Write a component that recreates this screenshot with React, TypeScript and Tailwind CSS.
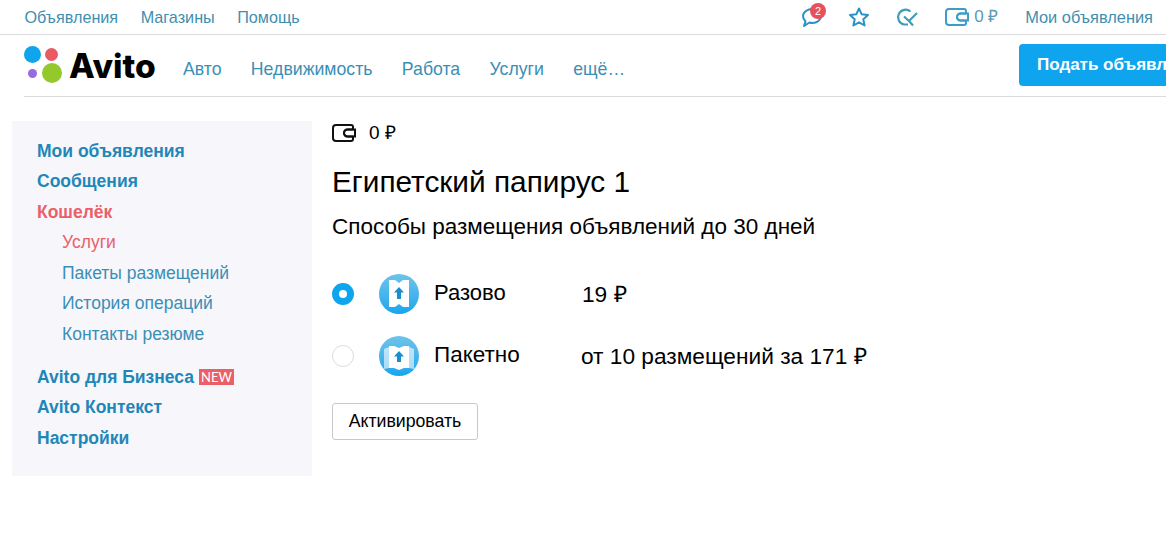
import React from 'react';

const WalletIcon: React.FC<{ color: string }> = ({ color }) => (
  <svg width="24" height="18" viewBox="0 0 24 18" fill="none" stroke={color} strokeWidth="2">
    <path d="M4 1h15a2 2 0 0 1 2 2v2.500h-5.500a3.500 3.500 0 0 0 0 7H21V15a2 2 0 0 1-2 2H4a3 3 0 0 1-3-3V4a3 3 0 0 1 3-3z" strokeLinejoin="round" />
    <path d="M15.500 5.500H23v7h-7.500a3.500 3.500 0 0 1 0-7z" />
  </svg>
);

const PlacementIcon: React.FC<{ pack?: boolean }> = ({ pack }) => (
  <div className="w-10 h-10 rounded-full bg-gradient-to-b from-[#6cc4ea] to-[#0fa5ee] flex items-center justify-center">
    <svg width="40" height="40" viewBox="0 0 40 40">
      {pack ? (
        <>
          <path d="M5 13l5-2v21l-5 1zM35 13l-5-2v21l5 1z" fill="#fff" opacity="0.6" />
          <path d="M10 10h5l5 2 5-2h5v22h-5l-5 2-5-2h-5z" fill="#fff" />
        </>
      ) : (
        <path d="M10 6h6l4 3 4-3h6v27h-6l-4-3-4 3h-6z" fill="#fff" />
      )}
      <path d={pack ? 'M20 15l5 5.500h-3V26h-4v-5.500h-3z' : 'M20 13l5 5.500h-3V25h-4v-6.500h-3z'} fill="#1a8fd0" />
    </svg>
  </div>
);

const sideMain = 'text-[17.500px] leading-[21px] font-bold text-[#1f87b8]';
const sideSub = 'text-[17.500px] leading-[21px] text-[#3a8fb5] pl-[25px]';

const App: React.FC = () => {
  return (
    <div className="w-[1166px] h-[540px] overflow-hidden bg-white text-black font-['Liberation_Sans',Arial,sans-serif]">
      {/* top bar */}
      <div className="h-[35px] border-b border-[#dcdce0] flex items-center pl-[24.500px] pr-[13px] text-[16.200px] text-[#3f8fae]">
        <div className="flex gap-[22.500px]">
          <span>Объявления</span>
          <span>Магазины</span>
          <span>Помощь</span>
        </div>
        <div className="ml-auto flex items-center">
          <div className="relative w-[22px] h-[22px]">
            <svg width="22" height="22" viewBox="0 0 22 22" fill="none" stroke="#2a93c4" strokeWidth="2">
              <path d="M11.500 3c4.500 0 8.500 3 8.500 7s-4 7-8.500 7c-1 0-2-.100-3-.500L3 20l1.500-4.500C3 14 2 12.200 2 10c0-4 4.500-7 9.500-7z" strokeLinejoin="round" />
            </svg>
            <span className="absolute -top-[3px] left-[9px] w-[16px] h-[16px] rounded-full bg-[#e8505b] text-white text-[11px] leading-[16px] text-center">2</span>
          </div>
          <svg className="ml-[25px]" width="22" height="22" viewBox="0 0 22 22" fill="none" stroke="#2a93c4" strokeWidth="2" strokeLinejoin="round">
            <path d="M11 2.500l2.700 5.800 6.300.700-4.700 4.200 1.300 6.300L11 16.300l-5.600 3.200 1.300-6.300L2 9l6.300-.700z" />
          </svg>
          <svg className="ml-[26px]" width="22" height="22" viewBox="0 0 22 22" fill="none" stroke="#3f9dbb" strokeWidth="2.200">
            <path d="M14.500 5.500A7.500 7.500 0 1 0 8 18.500h4" />
            <path d="M8 10.500l5 4.500 8-8M13 15l4 4.500" />
          </svg>
          <div className="ml-[27px] h-[18px] flex"><WalletIcon color="#3d9dc8" /></div>
          <span className="ml-[5px] w-[25px] whitespace-nowrap text-[17px] text-[#5a9ab5]">0 ₽</span>
          <span className="ml-[26px] text-[16.400px]">Мои объявления</span>
        </div>
      </div>

      {/* main header */}
      <div className="ml-[24px] h-[62px] border-b border-[#dcdce0] flex relative">
        <div className="relative w-[38px] h-[38px] mt-[10px]">
          <span className="absolute left-0 top-[1px] w-[17px] h-[17px] rounded-full bg-[#0fa5ee]" />
          <span className="absolute left-[21px] top-[3px] w-[13px] h-[13px] rounded-full bg-[#ea5a62]" />
          <span className="absolute left-[4px] top-[24px] w-[9px] h-[9px] rounded-full bg-[#9a6be0]" />
          <span className="absolute left-[18px] top-[18px] w-[20px] h-[20px] rounded-full bg-[#94c92d]" />
        </div>
        <span className="ml-[7px] mt-[11px] w-[87px] text-[33.500px] leading-[40px] font-['Inter',sans-serif] font-extrabold">Avito</span>
        <nav className="ml-[27px] mt-[22px] flex gap-[29.300px] text-[17.700px] leading-[24px] text-[#3a8fb5]">
          <span>Авто</span>
          <span>Недвижимость</span>
          <span>Работа</span>
          <span>Услуги</span>
          <span>ещё…</span>
        </nav>
        <button className="absolute left-[995px] top-[9px] w-[170px] h-[42px] rounded-l-[4px] bg-[#0fa5ee] text-white text-[17px] font-bold whitespace-nowrap overflow-hidden text-left pl-[18px]">
          Подать объявление
        </button>
      </div>

      <div className="flex mt-[24px]">
        {/* sidebar */}
        <aside className="ml-[12px] w-[300px] h-[355px] bg-[#f6f6fb] pl-[25px] pt-[19.500px]">
          <div className="flex flex-col gap-[9.500px]">
            <span className={sideMain}>Мои объявления</span>
            <span className={sideMain}>Сообщения</span>
            <span className={`${sideMain} !text-[#ea6068]`}>Кошелёк</span>
            <span className={`${sideSub} !text-[#ea6068]`}>Услуги</span>
            <span className={sideSub}>Пакеты размещений</span>
            <span className={sideSub}>История операций</span>
            <span className={sideSub}>Контакты резюме</span>
          </div>
          <div className="flex flex-col gap-[9.500px] mt-[22px]">
            <span className={`${sideMain} flex items-center`}>
              Avito для Бизнеса
              <span className="ml-[5px] bg-[#ea6068] text-white text-[13px] leading-[16px] px-[2px] font-normal font-['Lato',sans-serif]">NEW</span>
            </span>
            <span className={sideMain}>Avito Контекст</span>
            <span className={sideMain}>Настройки</span>
          </div>
        </aside>

        {/* content */}
        <main className="ml-[20px] flex-1">
          <div className="flex items-center h-[24px]">
            <WalletIcon color="#111" />
            <span className="ml-[13px] text-[19px]">0 ₽</span>
          </div>
          <h1 className="mt-[19px] text-[29.800px] leading-[36px]">Египетский папирус 1</h1>
          <p className="mt-[13px] text-[22.500px] leading-[28px]">Способы размещения объявлений до 30 дней</p>

          <div className="mt-[33px] flex items-center h-[40px]">
            <span className="w-[22px] h-[22px] rounded-full border-[7px] border-[#0fa5ee] bg-white" />
            <div className="ml-[25px]"><PlacementIcon /></div>
            <span className="ml-[15px] w-[148px] text-[22px] -mt-[3px]">Разово</span>
            <span className="text-[22.700px]">19 ₽</span>
          </div>
          <div className="mt-[22px] flex items-center h-[40px]">
            <span className="w-[22px] h-[22px] rounded-full border border-[#dcdce0] bg-white" />
            <div className="ml-[25px]"><PlacementIcon pack /></div>
            <span className="ml-[15px] w-[147px] text-[22.500px] -mt-[3px]">Пакетно</span>
            <span className="text-[22.700px]">от 10 размещений за 171 ₽</span>
          </div>

          <button className="mt-[27px] w-[146px] h-[37px] border border-[#c8c8cc] rounded-[3px] text-[17.700px] bg-white">Активировать</button>
        </main>
      </div>
    </div>
  );
};

export default App;
